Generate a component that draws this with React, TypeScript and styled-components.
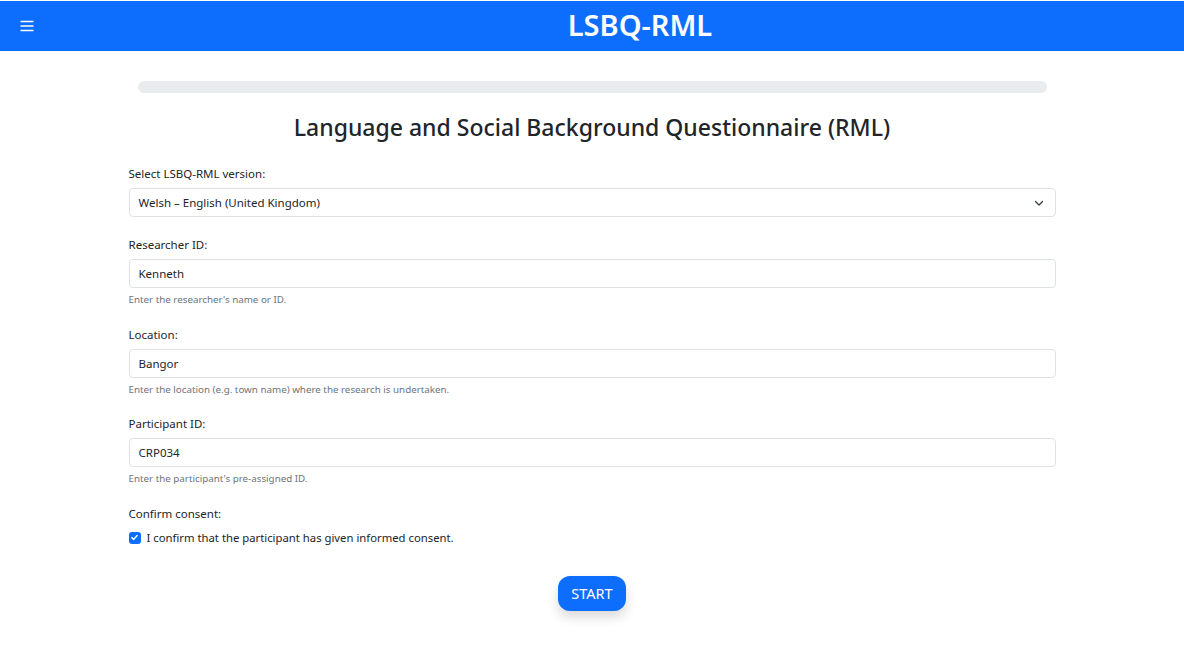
import styled, { createGlobalStyle } from 'styled-components'

const GlobalStyle = createGlobalStyle`
  * {
    box-sizing: border-box;
  }
  body {
    margin: 0;
    background: #fff;
    color: #212529;
    font-family: 'Noto Sans', 'Open Sans', sans-serif;
  }
`

const Page = styled.div`
  padding-top: 1px;
  min-height: 666px;
`

const Header = styled.header`
  display: flex;
  align-items: center;
  height: 50px;
  background: #0d6efd;
  color: #fff;
`

const MenuButton = styled.button`
  width: 96px;
  height: 50px;
  display: flex;
  align-items: center;
  padding: 0 0 0 20px;
  border: 0;
  background: transparent;
  cursor: pointer;
`

const Brand = styled.h1`
  flex: 1;
  margin: 0;
  text-align: center;
  font-size: 29px;
  font-weight: 600;
  line-height: 1;
  padding-bottom: 4px;
`

const Container = styled.main`
  max-width: 927px;
  margin: 0 auto;
  padding-top: 30px;
`

const Progress = styled.div`
  height: 12px;
  margin: 0 9px;
  border-radius: 6px;
  background: #e9ecef;
`

const Title = styled.h2`
  margin: 20px 0 22px;
  text-align: center;
  font-size: 23px;
  font-weight: 500;
  line-height: 29px;
  color: #212529;
`

const Field = styled.div<{ $tight?: boolean }>`
  margin-bottom: ${p => (p.$tight ? '17.67px' : '18px')};
`

const Label = styled.label`
  display: block;
  font-size: 11.5px;
  line-height: 19px;
  margin-bottom: 5px;
  color: #212529;
`

const Input = styled.input`
  display: block;
  width: 100%;
  height: 29px;
  padding: 0 9px;
  border: 1px solid #dee2e6;
  border-radius: 4px;
  font-family: inherit;
  font-size: 11.5px;
  color: #212529;
  background: #fff;
  outline: none;
`

const SelectBox = styled.div`
  height: 29px;
  border: 1px solid #dee2e6;
  border-radius: 4px;
  display: flex;
  align-items: center;
  justify-content: space-between;
  padding: 0 11px 0 9px;
  font-size: 11.5px;
  color: #212529;
  background: #fff;
`

const Help = styled.div`
  margin-top: 4px;
  font-size: 9.8px;
  line-height: 15px;
  color: #6c757d;
`

const CheckRow = styled.label`
  display: flex;
  align-items: center;
  gap: 6px;
  font-size: 11.3px;
  line-height: 20px;
`

const CheckBox = styled.span`
  width: 12px;
  height: 12px;
  border-radius: 3px;
  background: #0d6efd;
  display: flex;
  align-items: center;
  justify-content: center;
`

const Actions = styled.div`
  display: flex;
  justify-content: center;
  margin-top: 28px;
`

const StartButton = styled.button`
  width: 68px;
  height: 35px;
  border: 0;
  border-radius: 12px;
  background: #0d6efd;
  color: #fff;
  font-family: inherit;
  font-size: 14.5px;
  font-weight: 400;
  box-shadow: 0 6px 12px rgba(0, 0, 0, 0.15);
  cursor: pointer;
`

const fields = [
  { id: 'researcher', label: 'Researcher ID:', value: 'Kenneth', help: "Enter the researcher's name or ID." },
  { id: 'location', label: 'Location:', value: 'Bangor', help: 'Enter the location (e.g. town name) where the research is undertaken.' },
  { id: 'participant', label: 'Participant ID:', value: 'CRP034', help: "Enter the participant's pre-assigned ID." },
]

export default function App() {
  return (
    <Page>
      <GlobalStyle />
      <Header>
        <MenuButton aria-label='menu'>
          <svg width='14' height='12' viewBox='0 0 14 12'>
            <path d='M0.5 1.5h13M0.5 6h13M0.5 10.5h13' stroke='#fff' strokeWidth='1.4' />
          </svg>
        </MenuButton>
        <Brand>LSBQ-RML</Brand>
      </Header>

      <Container>
        <Progress />
        <Title>Language and Social Background Questionnaire (RML)</Title>

        <Field>
          <Label>Select LSBQ-RML version:</Label>
          <SelectBox>
            <span>Welsh – English (United Kingdom)</span>
            <svg width='10' height='8' viewBox='0 0 10 8'>
              <path d='M1.5 2.5l3.5 3.5 3.5-3.5' fill='none' stroke='#343a40' strokeWidth='1.3' strokeLinecap='round' strokeLinejoin='round' />
            </svg>
          </SelectBox>
        </Field>

        {fields.map(f => (
          <Field key={f.id} $tight>
            <Label htmlFor={f.id}>{f.label}</Label>
            <Input id={f.id} defaultValue={f.value} />
            <Help>{f.help}</Help>
          </Field>
        ))}

        <Field>
          <Label>Confirm consent:</Label>
          <CheckRow>
            <CheckBox>
              <svg width='9' height='9' viewBox='0 0 9 9'>
                <path d='M1.8 4.6l1.8 1.8 3.6-3.8' fill='none' stroke='#fff' strokeWidth='1.4' strokeLinecap='round' strokeLinejoin='round' />
              </svg>
            </CheckBox>
            I confirm that the participant has given informed consent.
          </CheckRow>
        </Field>

        <Actions>
          <StartButton>START</StartButton>
        </Actions>
      </Container>
    </Page>
  )
}
